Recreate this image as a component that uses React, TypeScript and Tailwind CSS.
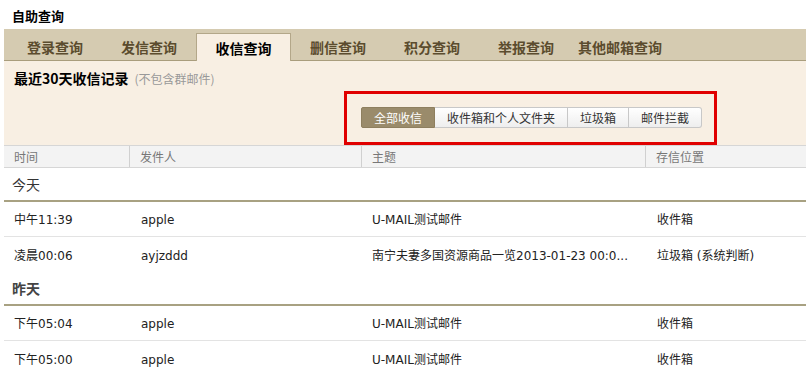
const tabs = ["登录查询", "发信查询", "收信查询", "删信查询", "积分查询", "举报查询", "其他邮箱查询"];

const filters = ["全部收信", "收件箱和个人文件夹", "垃圾箱", "邮件拦截"];

type Row = { time: string; from: string; subject: string; place: string };

const groups: { label: string; bold?: boolean; rows: Row[] }[] = [
  {
    label: "今天",
    rows: [
      { time: "中午11:39", from: "apple", subject: "U-MAIL测试邮件", place: "收件箱" },
      {
        time: "凌晨00:06",
        from: "ayjzddd",
        subject: "南宁夫妻多国资源商品一览2013-01-23 00:0...",
        place: "垃圾箱 (系统判断)",
      },
    ],
  },
  {
    label: "昨天",
    bold: true,
    rows: [
      { time: "下午05:04", from: "apple", subject: "U-MAIL测试邮件", place: "收件箱" },
      { time: "下午05:00", from: "apple", subject: "U-MAIL测试邮件", place: "收件箱" },
    ],
  },
];

export default function App() {
  return (
    <div className="w-[806px] h-[376px] overflow-hidden bg-white text-[#333] font-['DejaVu_Sans','Noto_Sans_CJK_SC',sans-serif] text-[12px]">
      {/* 标题 */}
      <div className="h-[29px] pl-[12px] pt-[6px] text-[13px] font-bold text-black font-['Noto_Sans_CJK_SC',sans-serif]">
        自助查询
      </div>

      {/* 标签栏 */}
      <div className="ml-[4px] h-[32px] bg-[#d5cbb1] border-b border-[#a99d7d] flex items-end pl-[4px]">
        {tabs.map((t, i) =>
          i === 2 ? (
            <div
              key={t}
              className="w-[95px] h-[28px] -mb-px pt-[2px] bg-[#f8efe3] border border-b-0 border-[#b3a789] flex items-center justify-center text-[14px] font-bold text-black font-['Noto_Sans_CJK_SC',sans-serif]"
            >
              {t}
            </div>
          ) : (
            <div
              key={t}
              className="w-[94px] h-[28px] pt-[2px] flex items-center justify-center whitespace-nowrap text-[14px] font-bold text-[#5b4c2e] font-['Noto_Sans_CJK_SC',sans-serif]"
            >
              {t}
            </div>
          )
        )}
      </div>

      {/* 筛选面板 */}
      <div className="ml-[4px] h-[84px] bg-[#f8efe3]">
        <div className="h-[30px] pl-[10px] pt-[10px] flex items-baseline gap-[6px] font-['Noto_Sans_CJK_SC',sans-serif]">
          <span className="text-[14px] font-bold text-black leading-none">最近30天收信记录</span>
          <span className="text-[12px] text-[#999] leading-none">(不包含群邮件)</span>
        </div>
        <div className="ml-[340px] w-[373px] h-[54px] border-[3px] border-[#e00000] pl-[14px] pt-[13px]">
          <div className="flex h-[21px] font-['Noto_Sans_CJK_SC',sans-serif]">
            {filters.map((f, i) =>
              i === 0 ? (
                <div
                  key={f}
                  className="px-[12px] flex items-center bg-[#9a8b6b] text-white rounded-l-[2px] border border-[#8e7f5f]"
                >
                  {f}
                </div>
              ) : (
                <div
                  key={f}
                  className={
                    "px-[12px] flex items-center text-[#333] bg-gradient-to-b from-white to-[#eeeeee] border border-l-0 border-[#c8c8c8]" +
                    (i === filters.length - 1 ? " rounded-r-[3px]" : "")
                  }
                >
                  {f}
                </div>
              )
            )}
          </div>
        </div>
      </div>

      {/* 表头 */}
      <div className="ml-[4px] h-[23px] bg-[#f3f3f3] border-y border-[#d6d6d6] flex text-[#777] font-['Noto_Sans_CJK_SC',sans-serif]">
        <div className="w-[126px] pl-[10px] flex items-center border-r border-[#d0d0d0]">时间</div>
        <div className="w-[232px] pl-[10px] flex items-center border-r border-[#d0d0d0]">发件人</div>
        <div className="w-[284px] pl-[10px] flex items-center border-r border-[#d0d0d0]">主题</div>
        <div className="flex-1 pl-[10px] flex items-center">存信位置</div>
      </div>

      {/* 列表 */}
      {groups.map((g) => (
        <div key={g.label}>
          <div
            className={
              "ml-[4px] h-[34px] pl-[8px] flex items-center text-[14px] border-b-2 border-[#a8a182] font-['Noto_Sans_CJK_SC',sans-serif] " +
              (g.bold ? "font-bold text-[#444]" : "text-[#333]")
            }
          >
            {g.label}
          </div>
          {g.rows.map((r, i) => (
            <div
              key={r.time}
              className={
                "ml-[4px] h-[35px] pt-[2px] flex items-center text-[#222]" +
                (i < g.rows.length - 1 ? " border-b border-[#e3e3e3]" : "")
              }
            >
              <div className="w-[127px] pl-[10px] whitespace-nowrap">{r.time}</div>
              <div className="w-[231px] pl-[10px] whitespace-nowrap">{r.from}</div>
              <div className="w-[285px] pl-[10px] pr-[6px] whitespace-nowrap overflow-hidden">{r.subject}</div>
              <div className="flex-1 pl-[10px] whitespace-nowrap">{r.place}</div>
            </div>
          ))}
        </div>
      ))}
    </div>
  );
}
